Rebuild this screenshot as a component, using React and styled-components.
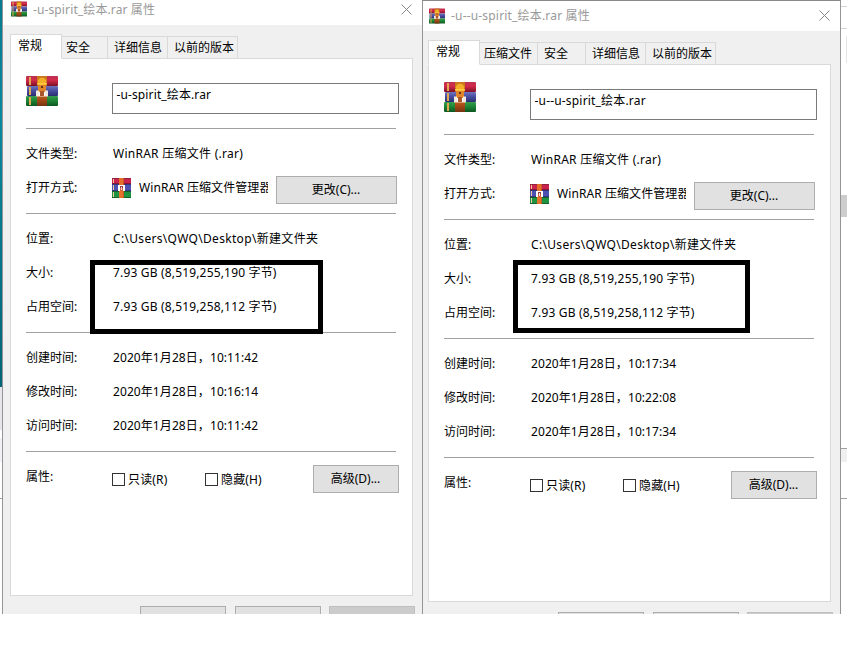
import React from "react";
import styled, { createGlobalStyle } from "styled-components";

const Global = createGlobalStyle`
  * { box-sizing: border-box; }
  body { margin: 0; background: #fff; overflow: hidden; }
  #root { font: 12px/16px "Noto Sans", "Noto Sans CJK SC", sans-serif; color: #000; }
`;

const Page = styled.div`
  width: 847px;
  height: 662px;
  background: #fff;
  overflow: hidden;
`;

const Desktop = styled.div`
  position: relative;
  display: flex;
  height: 614px;
  overflow: hidden;
`;

const Edge = styled.div`
  display: flex;
  flex-direction: column;
  flex: none;
  width: ${(p) => p.$w}px;
`;

const Strip = styled.div`
  flex: none;
  height: ${(p) => p.$h}px;
  margin-left: ${(p) => p.$inset || 0}px;
  background: ${(p) => p.$bg};
`;

const Dialog = styled.section`
  flex: none;
  width: ${(p) => p.$w}px;
  height: 640px;
  background: #f0f0f0;
  border-left: 1px solid #949499;
  border-top: ${(p) => (p.$framed ? "1px solid #88888c" : "0")};
  border-right: ${(p) => (p.$framed ? "1px solid #949499" : "0")};
`;

const TitleBar = styled.header`
  display: flex;
  align-items: center;
  height: ${(p) => p.$h}px;
  padding: ${(p) => p.$pad};
  background: #fff;
  color: #999;
`;

const Title = styled.span`
  flex: 1;
  margin-left: 6px;
  padding-top: ${(p) => p.$drop}px;
  white-space: pre;
  letter-spacing: ${(p) => p.$ls}px;
`;

const Body = styled.div`
  padding: 9px 0 0 ${(p) => p.$left}px;
`;

const Tabs = styled.nav`
  display: flex;
  align-items: flex-end;
  height: 25px;
  margin-bottom: -1px;
  position: relative;
`;

const Tab = styled.div`
  width: ${(p) => p.$w}px;
  height: ${(p) => (p.$active ? 25 : 23)}px;
  padding: ${(p) => (p.$active ? "3px 0 0 7px" : `3px 0 0 ${p.$pad}px`)};
  border: 1px solid #d9d9d9;
  border-left-width: ${(p) => (p.$active ? 1 : 0)}px;
  border-bottom-color: ${(p) => (p.$active ? "#fff" : "#d9d9d9")};
  background: ${(p) => (p.$active ? "#fff" : "#f0f0f0")};
  white-space: nowrap;
`;

const Panel = styled.div`
  width: 403px;
  height: 538px;
  padding-left: 15px;
  border: 1px solid #d9d9d9;
  background: #fff;
`;

const Head = styled.div`
  display: flex;
  align-items: flex-start;
  height: 69px;
  padding-top: 16px;
`;

const NameField = styled.div`
  width: 287px;
  height: 31px;
  margin: 8px 0 0 54px;
  padding: 3px 0 0 3.5px;
  border: 1px solid #7a7a7a;
  letter-spacing: ${(p) => p.$ls}px;
`;

const Group = styled.div`
  width: 370px;
  padding: 8px 0;
  border-top: 1px solid #a0a0a0;
`;

const Row = styled.div`
  display: flex;
  align-items: center;
  height: 34px;
`;

const Label = styled.span`
  flex: none;
  width: 87px;
  white-space: nowrap;
`;

const Value = styled.span`
  white-space: nowrap;
  letter-spacing: ${(p) => p.$ls}px;
`;

const Program = styled.div`
  display: flex;
  flex: none;
  align-items: center;
  width: 156px;
  margin-left: -1px;
`;

const ProgramName = styled.span`
  width: 129px;
  margin-left: 7px;
  overflow: hidden;
  white-space: nowrap;
  letter-spacing: 0.08px;
`;

const Button = styled.button`
  flex: none;
  width: ${(p) => p.$w}px;
  height: 28px;
  margin: ${(p) => p.$m || 0};
  padding: 0 ${(p) => p.$shift || 0}px 0 0;
  border: 1px solid ${(p) => (p.$disabled ? "#bfbfbf" : "#adadad")};
  background: ${(p) => (p.$disabled ? "#cccccc" : "#e1e1e1")};
  color: ${(p) => (p.$disabled ? "#838383" : "#000")};
  font: inherit;
`;

const Checks = styled.div`
  display: flex;
  flex: none;
  width: 201px;
  margin: 5px 0 0 -1px;
`;

const Check = styled.label`
  display: flex;
  flex: none;
  align-items: center;
  width: 93px;
  height: 16px;
  white-space: nowrap;
  letter-spacing: 0.15px;
`;

const Box = styled.i`
  flex: none;
  width: 13px;
  height: 13px;
  margin-right: 3px;
  border: 1px solid #333;
  background: #fff;
`;

const Footer = styled.footer`
  display: flex;
  gap: 9px;
  margin: 10px 0 0 130px;
`;

const Highlight = styled.div`
  position: absolute;
  left: ${(p) => p.$x}px;
  top: 260px;
  width: ${(p) => p.$w}px;
  height: ${(p) => p.$h}px;
  border: 5px solid #000;
`;

const Svg = styled.svg`
  display: block;
  flex: none;
`;

function Close() {
  return (
    <Svg width="11" height="11" viewBox="0 0 11 11" fill="none" stroke="#888" strokeWidth="1">
      <path d="M.5.5l10 10M10.5.5l-10 10" />
    </Svg>
  );
}

function Gradient({ id, a, b, c }) {
  return (
    <linearGradient id={id} x1="0" y1="0" x2="0" y2="1">
      <stop offset="0" stopColor={a} />
      <stop offset=".4" stopColor={b} />
      <stop offset="1" stopColor={c} />
    </linearGradient>
  );
}

function Books({ size, id }) {
  return (
    <Svg width={size} height={size} viewBox="0 0 32 32">
      <defs>
        <Gradient id={id + "r"} a="#b93252" b="#d52a4b" c="#7c1028" />
        <Gradient id={id + "b"} a="#6f75bb" b="#4c51a6" c="#292e70" />
        <Gradient id={id + "g"} a="#399c4e" b="#1f8a38" c="#0b5720" />
        <Gradient id={id + "o"} a="#bc5b1b" b="#a44a17" c="#733310" />
      </defs>
      <rect x="0" y="1" width="32" height="10" rx="1" fill={`url(#${id}r)`} />
      <rect x="1" y="11" width="31" height="10" rx="1" fill={`url(#${id}b)`} />
      <rect x="0" y="21" width="32" height="10" rx="1" fill={`url(#${id}g)`} />
      <path d="M4 2v8M4 12v8M4 22v8" stroke="#e0a850" strokeWidth="2" />
      <rect x="11" y="21" width="10" height="10" fill={`url(#${id}o)`} />
      <path d="M11 1h10v6H11z" fill="#c9781c" />
      <path d="M11.500 8c0-7 9-7 9 0v3h-9z" fill="#f3af28" />
      <path d="M11 8h10v1.500H11z" fill="#ffc940" />
      <path d="M12 10h8v7l-2 3h-4l-2-3z" fill="#e0842c" />
      <path d="M15 11h2v2h-2z" fill="#693016" />
      <path d="M10 15.500h3v4h6v-4h3v6H10z" fill="#f2eadf" />
      <path d="M14 16h4v5h-4z" fill="#a8552c" />
      <path d="M13 17h1v4h-1M18 17h1v4h-1" fill="#fff" />
    </Svg>
  );
}

function BooksFlat() {
  return (
    <Svg width="20" height="20" viewBox="0 0 20 20" shapeRendering="crispEdges">
      <path d="M0 0h19v6H0z" fill="#c9234d" />
      <path d="M0 0h19v1H0z" fill="#8f2340" />
      <path d="M0 5h19v1H0z" fill="#8a1437" />
      <path d="M0 6h19v7H0z" fill="#4d52b0" />
      <path d="M0 6h19v1H0zM0 12h19v1H0z" fill="#34367f" />
      <path d="M0 13h19v7H0z" fill="#1f9440" />
      <path d="M0 13h19v1H0zM0 19h19v1H0z" fill="#126229" />
      <path d="M1 1h1v4H1zM1 7h1v5H1zM1 14h1v5H1z" fill="#f1c8a0" />
      <path d="M7 0h5v20H7z" fill="#e4702a" />
      <path d="M11 0h1v7h-1zM11 13h1v7h-1z" fill="#c75a22" />
      <path d="M6 7h7v6H6z" fill="#fff" />
      <path d="M8 8h3v2H8z" fill="#8f3f50" />
      <path d="M8 10h3v3H8z" fill="#d9603f" />
      <path d="M9 9h1v3H9z" fill="#f6d9cf" />
    </Svg>
  );
}

function Field({ label, ls = 0.08, children }) {
  return (
    <Row>
      <Label>{label}</Label>
      <Value $ls={ls}>{children}</Value>
    </Row>
  );
}

function Properties({ id, width, framed, titleHeight, titlePad, titleDrop, ls, left, file, tabs, times }) {
  return (
    <Dialog $w={width} $framed={framed}>
      <TitleBar $h={titleHeight} $pad={titlePad}>
        <Books size={16} id={id + "s"} />
        <Title $ls={ls} $drop={titleDrop}>{file} 属性</Title>
        <Close />
      </TitleBar>
      <Body $left={left}>
        <Tabs>
          <Tab $w={52} $active>常规</Tab>
          {tabs.map(([name, w, pad]) => (
            <Tab key={name} $w={w} $pad={pad}>{name}</Tab>
          ))}
        </Tabs>
        <Panel>
          <Head>
            <Books size={32} id={id + "l"} />
            <NameField $ls={ls}>{file}</NameField>
          </Head>
          <Group>
            <Field label="文件类型:" ls={0.26}>WinRAR 压缩文件 (.rar)</Field>
            <Row>
              <Label>打开方式:</Label>
              <Program>
                <BooksFlat />
                <ProgramName>WinRAR 压缩文件管理器</ProgramName>
              </Program>
              <Button $w={121} $m="4px 0 0 8px" $shift={1}>更改(C)...</Button>
            </Row>
          </Group>
          <Group>
            <Field label="位置:" ls={0.32}>C:\Users\QWQ\Desktop\新建文件夹</Field>
            <Field label="大小:" ls={0.17}>7.93 GB (8,519,255,190 字节)</Field>
            <Field label="占用空间:" ls={0.17}>7.93 GB (8,519,258,112 字节)</Field>
          </Group>
          <Group>
            <Field label="创建时间:">2020年1月28日，{times[0]}</Field>
            <Field label="修改时间:">2020年1月28日，{times[1]}</Field>
            <Field label="访问时间:">2020年1月28日，{times[2]}</Field>
          </Group>
          <Group>
            <Row>
              <Label>属性:</Label>
              <Checks>
                <Check><Box />只读(R)</Check>
                <Check><Box />隐藏(H)</Check>
              </Checks>
              <Button $w={86} $m="4px 0 0" $shift={1}>高级(D)...</Button>
            </Row>
          </Group>
        </Panel>
        <Footer>
          <Button $w={86} />
          <Button $w={86} />
          <Button $w={86} $disabled $m="0 0 0 -1px" />
        </Footer>
      </Body>
    </Dialog>
  );
}

export default function App() {
  return (
    <Page>
      <Global />
      <Desktop>
        <Edge $w={2}>
          <Strip $h={387} $bg="linear-gradient(#087b90, #08899e 30%, #056477)" />
          <Strip $h={43} $bg="#e6e6e8" />
          <Strip $h={8} $bg="#fff" />
          <Strip $h={24} $bg="#f0f2f5" />
          <Strip $h={36} $bg="#fff" />
          <Strip $h={1} $bg="#a0a0a0" />
        </Edge>
        <Properties
          id="a"
          width={420}
          titleHeight={25}
          titlePad="0 10px 7px 8px"
          titleDrop={2}
          ls={0.12}
          left={7}
          file="-u-spirit_绘本.rar"
          tabs={[["安全", 46, 4], ["详细信息", 60, 6], ["以前的版本", 70, 6]]}
          times={["10:11:42", "10:16:14", "10:11:42"]}
        />
        <Properties
          id="b"
          width={419}
          framed
          titleHeight={30}
          titlePad="0 10px 1px 6px"
          titleDrop={1}
          ls={0.18}
          left={5}
          file="-u--u-spirit_绘本.rar"
          tabs={[["压缩文件", 58, 4], ["安全", 48, 6], ["详细信息", 60, 6], ["以前的版本", 70, 6]]}
          times={["10:17:34", "10:22:08", "10:17:34"]}
        />
        <Edge $w={6}>
          <Strip $h={6} $bg="#fff" />
          <Strip $h={1} $bg="#d4d4d4" />
          <Strip $h={21} $bg="#fff" />
          <Strip $h={1} $bg="#d4d4d4" />
          <Strip $h={7} $bg="#fff" />
          <Strip $h={27} $inset={5} $bg="#e5e5e5" />
          <Strip $h={132} $bg="#fff" />
          <Strip $h={22} $bg="#cdcdcd" />
          <Strip $h={231} $bg="#fff" />
          <Strip $h={1} $bg="#a0a0a0" />
          <Strip $h={13} $bg="#f0f0f0" />
          <Strip $h={36} $bg="#fff" />
          <Strip $h={1} $bg="#a0a0a0" />
        </Edge>
        <Highlight $x={90} $w={233} $h={74} />
        <Highlight $x={513} $w={237} $h={73} />
      </Desktop>
    </Page>
  );
}
